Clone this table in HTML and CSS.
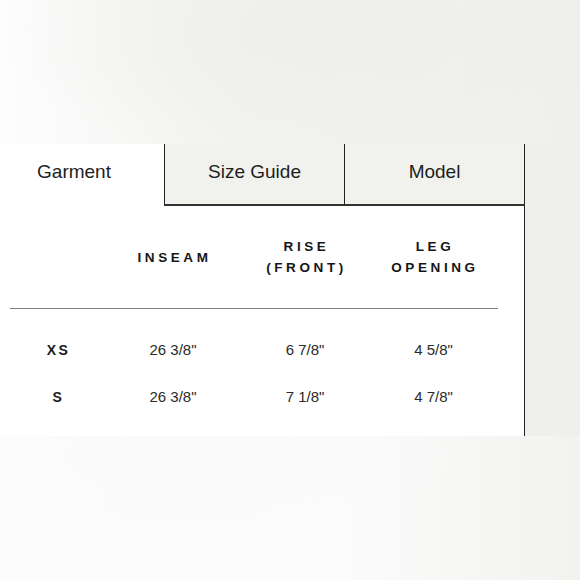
FILE: index.html
```html
<!DOCTYPE html>
<html>
<head>
<meta charset="utf-8">
<link rel="stylesheet" href="styles.css">
</head>
<body>
<div class="top"></div>
<div class="band">
  <div class="card">
    <div class="tabs">
      <div class="tab active">Garment</div>
      <div class="tab">Size Guide</div>
      <div class="tab">Model</div>
    </div>
    <div class="table">
      <div class="head">
        <div class="hcell"></div>
        <div class="hcell">INSEAM</div>
        <div class="hcell">RISE<br>(FRONT)</div>
        <div class="hcell">LEG<br>OPENING</div>
      </div>
      <div class="rows">
        <div class="row">
          <div class="size">XS</div>
          <div class="val">26 3/8"</div>
          <div class="val">6 7/8"</div>
          <div class="val">4 5/8"</div>
        </div>
        <div class="row">
          <div class="size">S</div>
          <div class="val">26 3/8"</div>
          <div class="val">7 1/8"</div>
          <div class="val">4 7/8"</div>
        </div>
      </div>
    </div>
  </div>
  <div class="side"></div>
</div>
<div class="bottom"></div>
</body>
</html>
```
FILE: styles.css
```css
html, body {
  margin: 0;
  padding: 0;
  width: 580px;
  height: 580px;
  overflow: hidden;
  background: #f7f7f5;
  font-family: "Liberation Sans", Arial, sans-serif;
  color: #1c1c1c;
}
.top {
  height: 144px;
  background:
    radial-gradient(ellipse 320px 140px at 320px 30px, #eeeeea 0%, rgba(238,238,234,0) 100%),
    linear-gradient(90deg, #fdfdfd 0%, #f3f3f1 40%, #efefeb 100%);
}
.band {
  display: flex;
  height: 292px;
  background: #efefeb;
}
.card {
  margin-left: -16px;
  width: 541px;
  flex: none;
  background: #ffffff;
  border-right: 1px solid #222;
  box-sizing: border-box;
  display: flex;
  flex-direction: column;
}
.side {
  flex: 1;
}
.tabs {
  display: flex;
  height: 62px;
  flex: none;
}
.tab {
  width: 180px;
  display: flex;
  align-items: center;
  justify-content: center;
  font-size: 19px;
  color: #1e1e1e;
  background: #f1f1ed;
  border-left: 1px solid #222;
  border-bottom: 2px solid #333;
  box-sizing: border-box;
  padding-bottom: 5px;
}
.tab.active {
  background: #ffffff;
  border-left: none;
  border-bottom: none;
  padding-bottom: 7px;
}
.table {
  padding: 0 26px 0 26px;
}
.head, .row {
  display: grid;
  grid-template-columns: 94px 138px 126px 131px;
}
.head {
  height: 102px;
  border-bottom: 1px solid #7d7d7d;
  align-items: center;
}
.hcell {
  text-align: center;
  font-size: 13.5px;
  font-weight: bold;
  letter-spacing: 3.6px;
  line-height: 21px;
  color: #161616;
  padding-left: 3px;
}
.rows {
  padding-top: 17px;
}
.row {
  height: 47px;
  align-items: center;
}
.size {
  text-align: center;
  font-size: 14px;
  font-weight: bold;
  letter-spacing: 2.5px;
  padding-left: 3px;
  color: #1a1a1a;
}
.val {
  text-align: center;
  font-size: 15px;
  color: #2a2a2a;
}
.bottom {
  height: 144px;
  background:
    radial-gradient(ellipse 300px 120px at 170px 20px, #fafafa 0%, rgba(250,250,250,0) 100%),
    linear-gradient(90deg, #fcfcfc 0%, #fbfbfb 60%, #f2f2ef 100%);
}
```
